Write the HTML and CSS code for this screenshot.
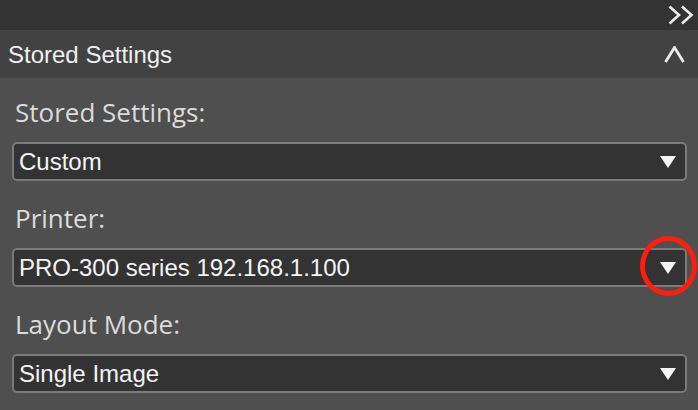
FILE: index.html
```html
<!DOCTYPE html>
<html>
<head>
<meta charset="utf-8">
<link rel="stylesheet" href="styles.css">
</head>
<body>
<div class="panel">
  <div class="topbar">
    <svg class="expand" width="26" height="20" viewBox="0 0 26 20">
      <polyline points="1.5,1.5 11,10 1.5,18.5" fill="none" stroke="#ececec" stroke-width="2.6"/>
      <polyline points="14,1.5 23.5,10 14,18.5" fill="none" stroke="#ececec" stroke-width="2.6"/>
    </svg>
  </div>
  <div class="header">
    <span class="header-title">Stored Settings</span>
    <svg class="collapse" width="21" height="17" viewBox="0 0 21 17">
      <polyline points="1.5,16 10.5,1.5 19.5,16" fill="none" stroke="#ececec" stroke-width="2.8"/>
    </svg>
  </div>
  <div class="content">
    <div class="field">
      <div class="label">Stored Settings:</div>
      <div class="select">
        <span class="value">Custom</span>
        <span class="arrow"></span>
      </div>
    </div>
    <div class="field">
      <div class="label">Printer:</div>
      <div class="select highlighted">
        <span class="value">PRO-300 series 192.168.1.100</span>
        <span class="arrow"></span>
        <span class="ring"></span>
      </div>
    </div>
    <div class="field">
      <div class="label">Layout Mode:</div>
      <div class="select">
        <span class="value">Single Image</span>
        <span class="arrow"></span>
      </div>
    </div>
  </div>
</div>
</body>
</html>
```

FILE: styles.css
```css
html, body {
  margin: 0;
  padding: 0;
  background: #4f4f4f;
}

.panel {
  width: 698px;
  height: 410px;
  overflow: hidden;
  background: #4f4f4f;
  font-family: "Liberation Sans", Arial, sans-serif;
}

.topbar {
  height: 30px;
  background: #333333;
  display: flex;
  justify-content: flex-end;
  align-items: flex-start;
  padding-right: 4px;
  box-sizing: border-box;
}

.expand {
  margin-top: 5px;
  display: block;
}

.header {
  height: 48px;
  background: #424242;
  display: flex;
  align-items: center;
  justify-content: space-between;
  padding: 0 13px 0 8px;
  box-sizing: border-box;
}

.header-title {
  font-size: 24px;
  color: #f0f0f0;
  line-height: 28px;
  margin-top: 2px;
}

.collapse {
  display: block;
  margin-top: 1px;
}

.content {
  padding: 19px 11px 0 12px;
}

.field + .field {
  margin-top: 22px;
}

.label {
  font-family: "Open Sans", "DejaVu Sans", sans-serif;
  font-size: 26px;
  line-height: 30px;
  color: #dcdcdc;
  padding-left: 3px;
  margin-bottom: 15px;
}

.select {
  position: relative;
  height: 39px;
  box-sizing: border-box;
  border: 2px solid #7b7b7b;
  border-radius: 5px;
  background: #333333;
  display: flex;
  align-items: center;
  justify-content: space-between;
  padding: 0 9px 0 5px;
}

.value {
  font-size: 24px;
  line-height: 28px;
  color: #f4f4f4;
}

.arrow {
  width: 0;
  height: 0;
  border-left: 8px solid transparent;
  border-right: 8px solid transparent;
  border-top: 12px solid #f4f4f4;
}

.ring {
  position: absolute;
  right: -12px;
  top: -14px;
  width: 57px;
  height: 60px;
  box-sizing: border-box;
  border: 5px solid #ff1e0e;
  border-radius: 50%;
}
```
